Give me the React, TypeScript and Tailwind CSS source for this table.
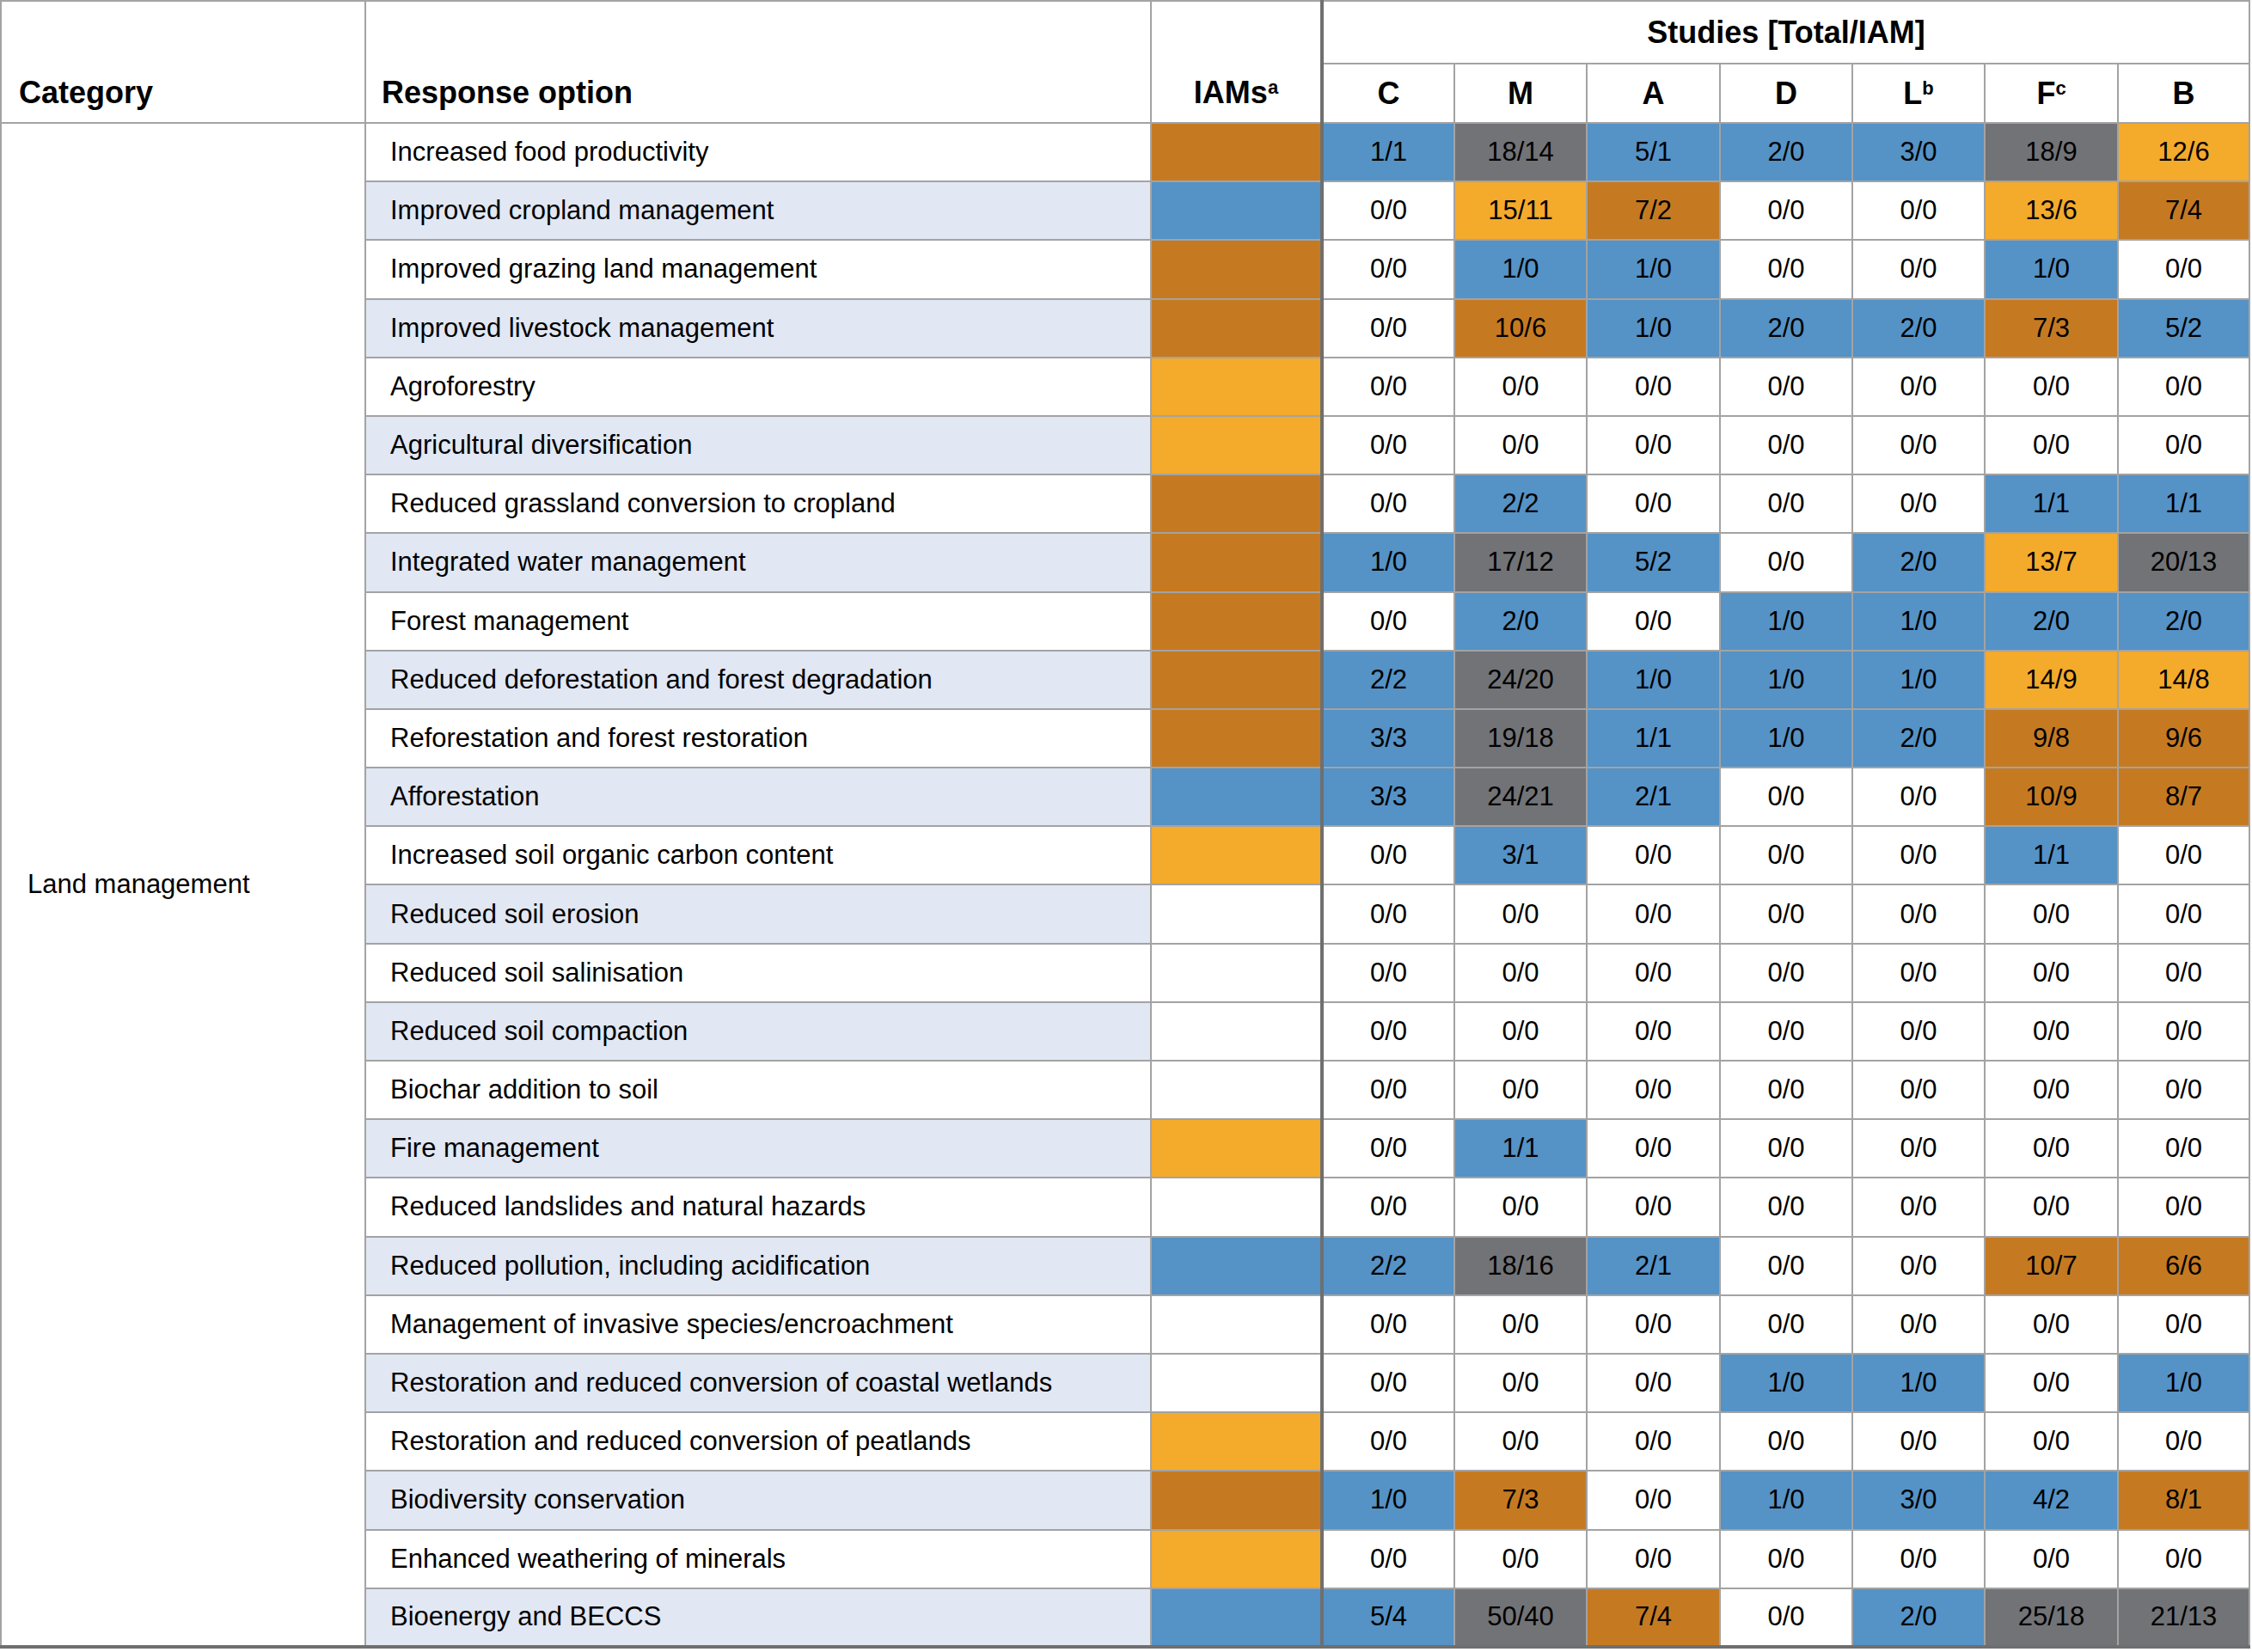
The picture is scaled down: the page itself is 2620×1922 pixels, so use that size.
import React from "react";

// cell colour key: b = blue, g = grey, o = brown, y = amber, w = none
const fill: Record<string, string> = {
  b: "bg-[#5592c6]",
  g: "bg-[#727376]",
  o: "bg-[#c57a22]",
  y: "bg-[#f4aa2b]",
  w: "bg-white",
};

const rows: [string, string, string][] = [
  ["Increased food productivity", "o", "1/1:b 18/14:g 5/1:b 2/0:b 3/0:b 18/9:g 12/6:y"],
  ["Improved cropland management", "b", "0/0:w 15/11:y 7/2:o 0/0:w 0/0:w 13/6:y 7/4:o"],
  ["Improved grazing land management", "o", "0/0:w 1/0:b 1/0:b 0/0:w 0/0:w 1/0:b 0/0:w"],
  ["Improved livestock management", "o", "0/0:w 10/6:o 1/0:b 2/0:b 2/0:b 7/3:o 5/2:b"],
  ["Agroforestry", "y", "0/0:w 0/0:w 0/0:w 0/0:w 0/0:w 0/0:w 0/0:w"],
  ["Agricultural diversification", "y", "0/0:w 0/0:w 0/0:w 0/0:w 0/0:w 0/0:w 0/0:w"],
  ["Reduced grassland conversion to cropland", "o", "0/0:w 2/2:b 0/0:w 0/0:w 0/0:w 1/1:b 1/1:b"],
  ["Integrated water management", "o", "1/0:b 17/12:g 5/2:b 0/0:w 2/0:b 13/7:y 20/13:g"],
  ["Forest management", "o", "0/0:w 2/0:b 0/0:w 1/0:b 1/0:b 2/0:b 2/0:b"],
  ["Reduced deforestation and forest degradation", "o", "2/2:b 24/20:g 1/0:b 1/0:b 1/0:b 14/9:y 14/8:y"],
  ["Reforestation and forest restoration", "o", "3/3:b 19/18:g 1/1:b 1/0:b 2/0:b 9/8:o 9/6:o"],
  ["Afforestation", "b", "3/3:b 24/21:g 2/1:b 0/0:w 0/0:w 10/9:o 8/7:o"],
  ["Increased soil organic carbon content", "y", "0/0:w 3/1:b 0/0:w 0/0:w 0/0:w 1/1:b 0/0:w"],
  ["Reduced soil erosion", "w", "0/0:w 0/0:w 0/0:w 0/0:w 0/0:w 0/0:w 0/0:w"],
  ["Reduced soil salinisation", "w", "0/0:w 0/0:w 0/0:w 0/0:w 0/0:w 0/0:w 0/0:w"],
  ["Reduced soil compaction", "w", "0/0:w 0/0:w 0/0:w 0/0:w 0/0:w 0/0:w 0/0:w"],
  ["Biochar addition to soil", "w", "0/0:w 0/0:w 0/0:w 0/0:w 0/0:w 0/0:w 0/0:w"],
  ["Fire management", "y", "0/0:w 1/1:b 0/0:w 0/0:w 0/0:w 0/0:w 0/0:w"],
  ["Reduced landslides and natural hazards", "w", "0/0:w 0/0:w 0/0:w 0/0:w 0/0:w 0/0:w 0/0:w"],
  ["Reduced pollution, including acidification", "b", "2/2:b 18/16:g 2/1:b 0/0:w 0/0:w 10/7:o 6/6:o"],
  ["Management of invasive species/encroachment", "w", "0/0:w 0/0:w 0/0:w 0/0:w 0/0:w 0/0:w 0/0:w"],
  ["Restoration and reduced conversion of coastal wetlands", "w", "0/0:w 0/0:w 0/0:w 1/0:b 1/0:b 0/0:w 1/0:b"],
  ["Restoration and reduced conversion of peatlands", "y", "0/0:w 0/0:w 0/0:w 0/0:w 0/0:w 0/0:w 0/0:w"],
  ["Biodiversity conservation", "o", "1/0:b 7/3:o 0/0:w 1/0:b 3/0:b 4/2:b 8/1:o"],
  ["Enhanced weathering of minerals", "y", "0/0:w 0/0:w 0/0:w 0/0:w 0/0:w 0/0:w 0/0:w"],
  ["Bioenergy and BECCS", "b", "5/4:b 50/40:g 7/4:o 0/0:w 2/0:b 25/18:g 21/13:g"],
];

const studies: React.ReactNode[] = [
  "C",
  "M",
  "A",
  "D",
  <>L<sup className="text-[22px] font-semibold">b</sup></>,
  <>F<sup className="text-[22px] font-semibold">c</sup></>,
  "B",
];

export default function App() {
  return (
    <div className="min-h-screen w-[2620px] bg-white font-['Liberation_Sans',Arial,sans-serif] text-black">
      <table className="w-[2616px] table-fixed border-collapse">
        <colgroup>
          <col className="w-[424px]" />
          <col className="w-[914px]" />
          <col className="w-[199px]" />
          <col className="w-[154px]" />
          <col className="w-[154px]" />
          <col className="w-[155px]" />
          <col className="w-[154px]" />
          <col className="w-[154px]" />
          <col className="w-[155px]" />
          <col className="w-[153px]" />
        </colgroup>
        <thead className="text-[36px] font-bold leading-[40px]">
          <tr className="h-[73px]">
            <th rowSpan={2} className="border-2 border-[#a3a3a3] pb-[14px] pl-[20px] text-left align-bottom">
              Category
            </th>
            <th rowSpan={2} className="border-2 border-[#a3a3a3] pb-[14px] pl-[18px] text-left align-bottom">
              Response option
            </th>
            <th rowSpan={2} className="border-2 border-[#a3a3a3] pb-[14px] text-center align-bottom">
              IAMs<sup className="text-[22px] font-semibold">a</sup>
            </th>
            <th colSpan={7} className="border-2 border-l-4 border-[#a3a3a3] border-l-[#6f6f6f] text-center align-middle">
              Studies [Total/IAM]
            </th>
          </tr>
          <tr className="h-[69px]">
            {studies.map((s, i) => (
              <th
                key={i}
                className={
                  i === 0
                    ? "border-2 border-l-4 border-[#a3a3a3] border-l-[#6f6f6f] text-center align-middle"
                    : "border-2 border-[#a3a3a3] text-center align-middle"
                }
              >
                {s}
              </th>
            ))}
          </tr>
        </thead>
        <tbody className="text-[31px] leading-[36px]">
          {rows.map(([name, iam, cells], r) => (
            <tr key={name} className="h-[68.2px]">
              {r === 0 && (
                <td
                  rowSpan={rows.length}
                  className="border-2 border-b-4 border-[#a3a3a3] border-b-[#6f6f6f] pl-[30px] align-middle"
                >
                  Land management
                </td>
              )}
              <td
                className={`border-2 border-[#a3a3a3] pl-[28px] align-middle ${
                  r % 2 === 1 ? "bg-[#e1e7f3]" : "bg-white"
                } ${r === rows.length - 1 ? "border-b-4 border-b-[#6f6f6f]" : ""}`}
              >
                {name}
              </td>
              <td
                className={`border-2 border-[#a3a3a3] ${fill[iam]} ${
                  r === rows.length - 1 ? "border-b-4 border-b-[#6f6f6f]" : ""
                }`}
              />
              {cells.split(" ").map((c, i) => {
                const [v, k] = c.split(":");
                return (
                  <td
                    key={i}
                    className={`border-2 border-[#a3a3a3] text-center align-middle ${fill[k]} ${
                      i === 0 ? "border-l-4 border-l-[#6f6f6f]" : ""
                    } ${r === rows.length - 1 ? "border-b-4 border-b-[#6f6f6f]" : ""}`}
                  >
                    {v}
                  </td>
                );
              })}
            </tr>
          ))}
        </tbody>
      </table>
    </div>
  );
}
